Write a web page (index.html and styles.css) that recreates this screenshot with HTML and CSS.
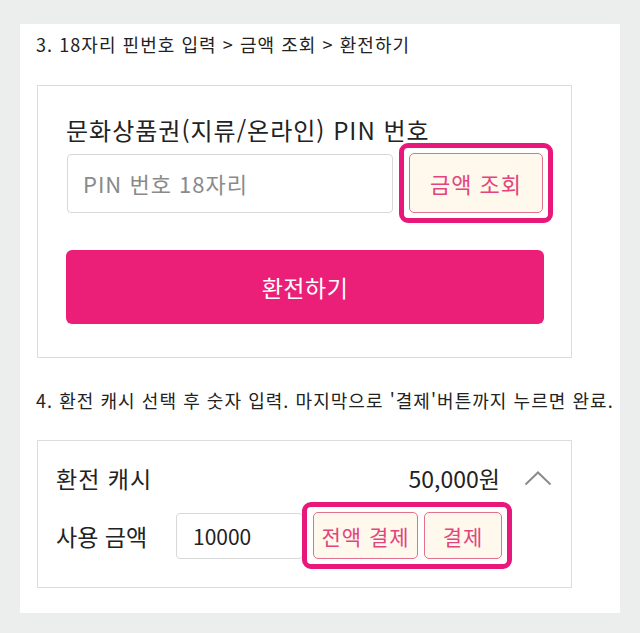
FILE: index.html
```html
<!DOCTYPE html>
<html lang="ko">
<head>
<meta charset="utf-8">
<title>환전하기</title>
<link rel="stylesheet" href="styles.css">
</head>
<body>
<div class="panel">
  <p class="step-title">3. 18자리 핀번호 입력 &gt; 금액 조회 &gt; 환전하기</p>
  <div class="card card-pin">
    <div class="field-label">문화상품권(지류/온라인) PIN 번호</div>
    <div class="pin-row">
      <input class="pin-input" type="text" placeholder="PIN 번호 18자리">
      <div class="highlight">
        <button class="btn-outline btn-check">금액 조회</button>
      </div>
    </div>
    <button class="btn-primary">환전하기</button>
  </div>

  <p class="step-title step-title-4">4. 환전 캐시 선택 후 숫자 입력. 마지막으로 '결제'버튼까지 누르면 완료.</p>
  <div class="card card-cash">
    <div class="cash-head">
      <span class="cash-title">환전 캐시</span>
      <div class="cash-right">
        <span class="cash-amount">50,000원</span>
        <svg class="chevron" width="28" height="16" viewBox="0 0 28 16"><polyline points="1.5,14.5 14,2.5 26.5,14.5" fill="none" stroke="#8c8c8c" stroke-width="2"/></svg>
      </div>
    </div>
    <div class="use-row">
      <span class="use-label">사용 금액</span>
      <input class="use-input" type="text" value="10000">
      <div class="highlight highlight-pay">
        <button class="btn-outline btn-all">전액 결제</button>
        <button class="btn-outline btn-pay">결제</button>
      </div>
    </div>
  </div>
</div>
</body>
</html>
```

FILE: styles.css
```css
* { box-sizing: border-box; }

body {
  margin: 0;
  background: #ebeeed;
  font-family: "Noto Sans CJK KR", "Noto Sans", sans-serif;
  color: #222;
}

.panel {
  width: 600px;
  margin: 24px 20px 20px;
  background: #fff;
  padding: 8px 0 25px 16px;
}

.step-title {
  margin: 0;
  font-size: 18px;
  line-height: 24px;
  letter-spacing: 1.05px;
  color: #222;
  white-space: nowrap;
}

.step-title-4 {
  margin-top: 30px;
}

.card {
  width: 535px;
  margin-left: 1px;
  border: 1px solid #dcdcdc;
  background: #fff;
}

.card-pin {
  margin-top: 29px;
  padding: 31px 27px 33px 28px;
}

.field-label {
  font-size: 24px;
  line-height: 26px;
  letter-spacing: 1px;
  color: #222;
  white-space: nowrap;
}

.pin-row {
  display: flex;
  align-items: center;
  gap: 6px;
  height: 80px;
}

.pin-input {
  flex: 0 0 auto;
  width: 326px;
  height: 59px;
  margin-left: 1px;
  border: 1px solid #d8d8d8;
  border-radius: 4px;
  padding: 0 15px;
  font-family: inherit;
  font-size: 22px;
  letter-spacing: 1px;
  color: #222;
  outline: none;
}

.pin-input::placeholder {
  color: #8a8a8a;
}

.highlight {
  flex: 0 0 auto;
  display: flex;
  gap: 6px;
  border: 5px solid #e8187a;
  border-radius: 9px;
  padding: 5px;
  background: #fff;
}

.btn-outline {
  border: 1.5px solid #e2708f;
  border-radius: 5px;
  background: #fff8ec;
  color: #e2457c;
  font-family: inherit;
  font-size: 21px;
  letter-spacing: 1px;
  padding: 0;
  cursor: pointer;
}

.btn-check {
  width: 134px;
  height: 60px;
  font-size: 22px;
}

.btn-primary {
  display: block;
  width: 478px;
  height: 74px;
  margin-top: 27px;
  border: none;
  border-radius: 6px;
  background: #ec1f78;
  color: #fff;
  font-family: inherit;
  font-size: 23px;
  letter-spacing: 0.5px;
  cursor: pointer;
}

.card-cash {
  margin-top: 28px;
  padding: 22px 19px 18px 18px;
}

.cash-head {
  display: flex;
  align-items: center;
  justify-content: space-between;
  height: 30px;
}

.cash-title {
  font-size: 23px;
  letter-spacing: 1px;
  color: #222;
}

.cash-right {
  display: flex;
  align-items: center;
  gap: 24px;
}

.cash-amount {
  font-size: 23px;
  color: #222;
}

.chevron {
  display: block;
}

.use-row {
  display: flex;
  align-items: center;
  height: 67px;
  margin-top: 9px;
}

.use-label {
  width: 120px;
  flex: 0 0 auto;
  font-size: 23px;
  color: #222;
}

.use-input {
  flex: 0 0 auto;
  width: 127px;
  height: 46px;
  border: 1px solid #d8d8d8;
  border-radius: 4px;
  padding: 0 16px;
  font-family: inherit;
  font-size: 21px;
  color: #222;
  outline: none;
}

.highlight-pay {
  margin-left: -1px;
  padding: 5px 5px 5px 6px;
}

.btn-all {
  width: 105px;
  height: 47px;
}

.btn-pay {
  width: 78px;
  height: 47px;
}
```
